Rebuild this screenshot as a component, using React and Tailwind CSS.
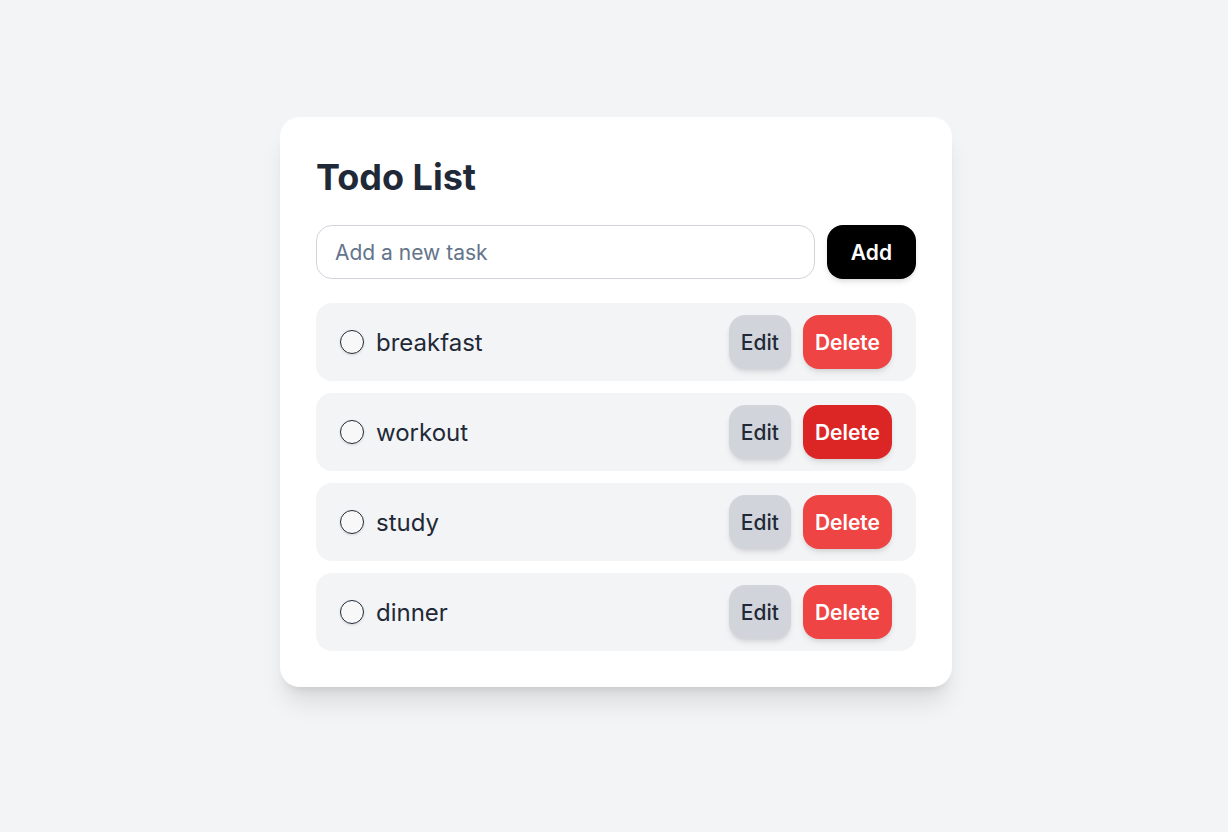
export default function App() {
  const tasks = ["breakfast", "workout", "study", "dinner"];

  return (
    <div className="min-h-screen bg-[#f3f4f6] pt-[117px]" style={{ fontFamily: "Inter, 'Noto Sans', sans-serif" }}>
      <div className="ml-[280px] w-[672px] bg-white rounded-[20px] shadow-xl p-9">
        <h1 className="text-4xl leading-[48px] font-bold text-[#1f2937] mb-6">Todo List</h1>

        <div className="flex gap-3 mb-6">
          <input
            type="text"
            placeholder="Add a new task"
            className="flex-1 border border-[#d1d5db] rounded-2xl px-[18px] pt-[13px] pb-[11px] text-[21px] leading-7 text-[#1f2937] placeholder:text-[#64748b] outline-none"
          />
          <button className="bg-black text-white text-[21px] font-semibold px-6 pt-px rounded-2xl shadow-md">
            Add
          </button>
        </div>

        <ul className="flex flex-col gap-3">
          {tasks.map((task, i) => (
            <li key={task} className="flex items-center justify-between bg-[#f3f4f6] rounded-2xl px-6 py-3">
              <div className="flex items-center gap-3">
                <span className="w-6 h-6 rounded-full border border-[#1f2937] bg-white/40 shadow-sm" />
                <span className="text-2xl text-[#1f2937] pt-0.5">{task}</span>
              </div>
              <div className="flex gap-3">
                <button className="bg-[#d1d5db] text-[#1f2937] text-[21px] font-medium px-3 pt-[14px] pb-[12px] leading-7 rounded-2xl shadow-md">
                  Edit
                </button>
                <button
                  className={
                    i === 1
                      ? "bg-[#dc2626] text-white text-[21px] font-semibold px-3 pt-[14px] pb-[12px] leading-7 rounded-2xl shadow-md"
                      : "bg-[#ef4444] text-white text-[21px] font-semibold px-3 pt-[14px] pb-[12px] leading-7 rounded-2xl shadow-md"
                  }
                >
                  Delete
                </button>
              </div>
            </li>
          ))}
        </ul>
      </div>
    </div>
  );
}
